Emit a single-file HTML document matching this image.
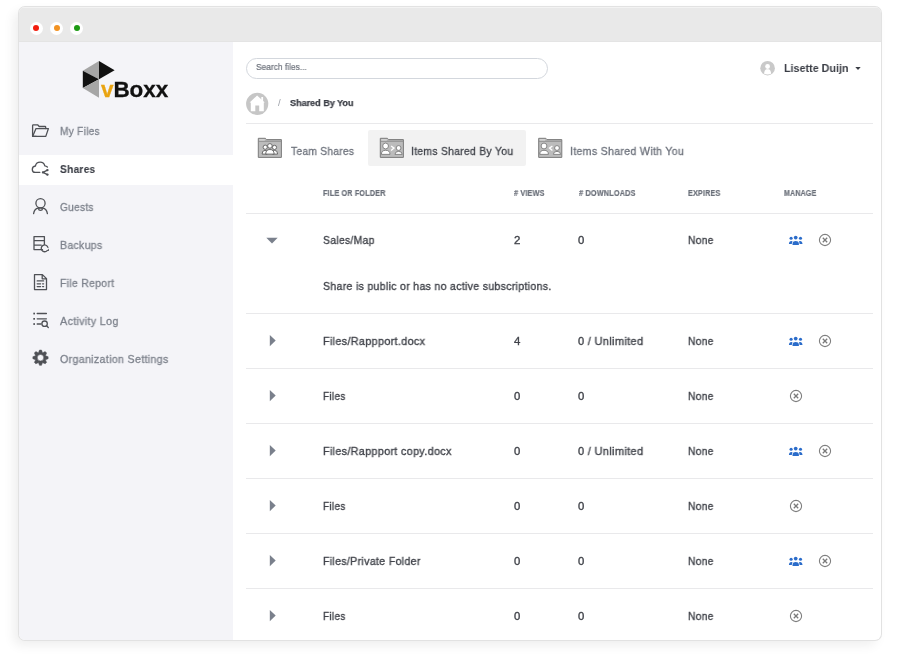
<!DOCTYPE html>
<html><head><meta charset="utf-8">
<style>
*{box-sizing:border-box;margin:0;padding:0}
html,body{width:900px;height:664px;overflow:hidden;background:#fff;font-family:"Liberation Sans",sans-serif}
.win{position:absolute;left:19px;top:7px;width:862px;height:633px;border-radius:6px;overflow:hidden;box-shadow:0 0 0 1px #e2e2e2,-5px 5px 12px rgba(0,0,0,.07);background:#fff}
.title{position:absolute;left:0;top:0;width:862px;height:35px;background:#e9e9e9;border-top:1.5px solid #f3f3f3;border-bottom:1px solid #e4e4e4}
.dot{position:absolute;top:13.5px;width:13px;height:13px;border-radius:50%;background:#fff}
.dot i{position:absolute;left:3.5px;top:3.5px;width:6px;height:6px;border-radius:50%}
.side{position:absolute;left:0;top:35px;width:214.2px;height:598px;background:#f4f4f8}
.t{position:absolute;white-space:nowrap;line-height:1;transform-origin:0 0;will-change:transform}
.ico{position:absolute;overflow:visible}
.hline{position:absolute;height:1px;background:#e9e9eb}
</style></head><body>
<div class="win">
  <div class="title">
    <div class="dot" style="left:10.5px"><i style="background:#f21d0e"></i></div>
    <div class="dot" style="left:31px"><i style="background:#f29222"></i></div>
    <div class="dot" style="left:51px"><i style="background:#1d9a13"></i></div>
  </div>
  <div class="side"></div>
</div>
<div style="position:absolute;left:19px;top:154.5px;width:214.2px;height:30px;background:#fff"></div>
<div style="position:absolute;left:368px;top:130px;width:158px;height:36px;background:#f2f2f2;border-radius:2px"></div>
<svg class="ico" style="left:0;top:0" width="900" height="664" viewBox="0 0 900 664">
  <polygon points="99,61 82.8,70.8 99,79.3" fill="#a6a6a6"/>
  <polygon points="99,61 114.6,70.2 99,79.3" fill="#111"/>
  <polygon points="82.8,70.8 82.8,87.9 99,79.3" fill="#111"/>
  <polygon points="82.8,87.9 99,97.7 99,79.3" fill="#a6a6a6"/>
  <!-- search bar -->
  <rect x="246.5" y="58.5" width="301" height="20" rx="10" fill="#fff" stroke="#d3d7dd" stroke-width="1"/>
  <!-- home -->
  <circle cx="257.2" cy="103.8" r="11.1" fill="#c6c6c6"/>
  <rect x="261.3" y="97" width="1.8" height="4" fill="#fff"/>
  <path d="M257.1 95.6 L249.6 102.4 L250.8 102.4 L250.8 111.2 L255.3 111.2 L255.3 105.4 L259.2 105.4 L259.2 111.2 L263.8 111.2 L263.8 102.4 L264.8 102.4 Z" fill="#fff"/>
  <!-- avatar -->
  <circle cx="767.6" cy="68.2" r="7.3" fill="#c9c9c9"/>
  <circle cx="767.6" cy="66.5" r="2.4" fill="#fff"/>
  <path d="M764.1 73.8 C764 71.3 765.2 69.8 766.4 69.2 L768.8 69.2 C770 69.8 771.2 71.3 771.1 73.8 Q767.6 75 764.1 73.8Z" fill="#fff"/>
  <polygon points="855.3,67 860.7,67 858,70" fill="#3a3d45"/>

  <!-- sidebar icons -->
  <g fill="none" stroke="#4f5156" stroke-width="1.3" stroke-linejoin="round" stroke-linecap="round">
    <!-- folder -->
    <path d="M36.2 136.4 L32.6 136.4 L32.6 125.6 Q32.6 124.8 33.4 124.8 L37.6 124.8 L39.2 126.5 L45 126.5 Q45.7 126.5 45.7 127.2 L45.7 128.6"/>
    <path d="M32.6 136.4 L36 128.6 L48.4 128.6 L45.8 136.4 Z"/>
    <!-- cloud share -->
    <path d="M39.8 172.4 L35.2 172.4 Q32.3 172.4 32.3 169.4 Q32.3 166.4 35.4 166 Q36.2 162.2 40.2 162.2 Q43.8 162.2 44.8 165.8 Q46.2 166 47.4 167"/>
    <path d="M47.4 170.2 L43 172.4 L47.4 174.6"/>
    <!-- person -->
    <circle cx="40.5" cy="203.2" r="4.6"/>
    <ellipse cx="40.5" cy="209.1" rx="1.9" ry="1.2"/>
    <path d="M33.6 213.6 Q34.4 208.8 38.3 208.2 M47.4 213.6 Q46.6 208.8 42.7 208.2"/>
    <!-- backups -->
    <path d="M42.5 249.6 L34 249.6 L34 236.6 L44.4 236.6 L44.4 244.4 M34 240.6 L44.4 240.6 M34 245.2 L41.2 245.2"/>
    <path d="M47.9 247.4 A3.4 3.4 0 1 0 47.2 250.6"/>
    <!-- file report -->
    <path d="M34.5 274.6 L42.4 274.6 L46.5 278.6 L46.5 289.6 L34.5 289.6 Z M42.2 274.8 L42.2 278.8 L46.3 278.8"/>
    <path d="M37.2 280.9 L43.6 280.9 M37.2 283.8 L40.6 283.8 M42.6 283.8 L43.6 283.8 M37.2 286.6 L40.6 286.6 M42.6 286.6 L43.6 286.6"/>
    <!-- activity log -->
    <path d="M37.2 313.5 L46.4 313.5 M37.2 318.8 L46.4 318.8 M37.2 324 L41 324"/>
    <circle cx="44.6" cy="323.7" r="2.7"/>
    <path d="M46.6 325.8 L48.3 327.5"/>
  </g>
  <g fill="#4f5156">
    <path d="M46.6 250.9 L48.9 250.9 L48.9 248.4 Z"/>
    <circle cx="47.4" cy="170.1" r="1.2"/><circle cx="47.4" cy="174.6" r="1.2"/><circle cx="42.9" cy="172.4" r="1.1"/>
    <rect x="33.3" y="312.7" width="1.7" height="1.7"/><rect x="33.3" y="318" width="1.7" height="1.7"/><rect x="33.3" y="323.2" width="1.7" height="1.7"/>
    <path fill-rule="evenodd" stroke="#4f5156" stroke-width="0.5" stroke-linejoin="round" d="M38.56 352.55 L39.50 350.06 L41.50 350.06 L42.44 352.55 L42.77 352.69 L45.19 351.60 L46.60 353.01 L45.51 355.43 L45.65 355.76 L48.14 356.70 L48.14 358.70 L45.65 359.64 L45.51 359.97 L46.60 362.39 L45.19 363.80 L42.77 362.71 L42.44 362.85 L41.50 365.34 L39.50 365.34 L38.56 362.85 L38.23 362.71 L35.81 363.80 L34.40 362.39 L35.49 359.97 L35.35 359.64 L32.86 358.70 L32.86 356.70 L35.35 355.76 L35.49 355.43 L34.40 353.01 L35.81 351.60 L38.23 352.69 Z M43.70 357.7 A3.2 3.2 0 1 0 37.30 357.7 A3.2 3.2 0 1 0 43.70 357.7 Z"/>
  </g>
  <g transform="translate(257.8,137.8)">
    <path d="M0.5 0.5 L7.6 0.5 L8.8 1.8 L23.6 1.8 L23.6 19.6 L0.5 19.6 Z" fill="#bcbcbc" stroke="#7b7b7b" stroke-width="1"/>
    <path d="M0.5 3.4 L23.6 3.4" stroke="#8a8a8a" stroke-width="1"/>
    <rect x="1.5" y="1.4" width="5.5" height="1.4" fill="#d8d8d8"/>
    <g fill="#fff" stroke="#5e5e5e" stroke-width="0.9">
      <circle cx="7.4" cy="9.4" r="2.1"/><circle cx="16.7" cy="9.6" r="2.1"/>
      <path d="M4.3 16.3 Q4.2 12.6 7.2 12.6 Q8.6 12.6 9.4 13.3 L9.4 16.3 Z"/>
      <path d="M19.8 16.3 Q19.9 12.6 16.9 12.6 Q15.5 12.6 14.7 13.3 L14.7 16.3 Z"/>
      <circle cx="12.1" cy="8.1" r="2.3"/>
      <path d="M7.9 16.3 Q7.9 11.7 12.1 11.7 Q16.3 11.7 16.3 16.3 Z"/>
    </g>
    </g><g transform="translate(379.8,137.8)">
    <path d="M0.5 0.5 L7.6 0.5 L8.8 1.8 L23.6 1.8 L23.6 19.6 L0.5 19.6 Z" fill="#bcbcbc" stroke="#7b7b7b" stroke-width="1"/>
    <path d="M0.5 3.4 L23.6 3.4" stroke="#8a8a8a" stroke-width="1"/>
    <rect x="1.5" y="1.4" width="5.5" height="1.4" fill="#d8d8d8"/>
    <g fill="#fff" stroke="#6e6e6e" stroke-width="0.8">
      <circle cx="5.8" cy="8.2" r="2.9"/>
      <path d="M1.6 16.6 Q1.6 12.5 5.8 12.5 Q10.2 12.5 10.2 16.6 Z"/>
      <circle cx="18.8" cy="10.2" r="2.4"/>
      <path d="M15.2 16.6 Q15.2 13.6 18.8 13.6 Q22.4 13.6 22.4 16.6 Z"/>
    </g>
    <path d="M11.3 8.2 L14.2 10.3 L11.3 12.6" fill="none" stroke="#fff" stroke-width="1.3"/>
    </g><g transform="translate(538.2,137.8)">
    <path d="M0.5 0.5 L7.6 0.5 L8.8 1.8 L23.6 1.8 L23.6 19.6 L0.5 19.6 Z" fill="#bcbcbc" stroke="#7b7b7b" stroke-width="1"/>
    <path d="M0.5 3.4 L23.6 3.4" stroke="#8a8a8a" stroke-width="1"/>
    <rect x="1.5" y="1.4" width="5.5" height="1.4" fill="#d8d8d8"/>
    <g fill="#fff" stroke="#6e6e6e" stroke-width="0.8">
      <circle cx="5.8" cy="8.2" r="2.9"/>
      <path d="M1.6 16.6 Q1.6 12.5 5.8 12.5 Q10.2 12.5 10.2 16.6 Z"/>
      <circle cx="18.8" cy="10.2" r="2.4"/>
      <path d="M15.2 16.6 Q15.2 13.6 18.8 13.6 Q22.4 13.6 22.4 16.6 Z"/>
    </g>
    <path d="M14.2 8.2 L11.3 10.3 L14.2 12.6" fill="none" stroke="#fff" stroke-width="1.3"/>
    </g>
</svg>
<div class="hline" style="left:246px;top:122.8px;width:627px"></div><div class="hline" style="left:246px;top:212.5px;width:627px"></div><div class="hline" style="left:246px;top:312.8px;width:627px"></div><div class="hline" style="left:246px;top:367.92px;width:627px"></div><div class="hline" style="left:246px;top:423.04px;width:627px"></div><div class="hline" style="left:246px;top:478.15999999999997px;width:627px"></div><div class="hline" style="left:246px;top:533.28px;width:627px"></div><div class="hline" style="left:246px;top:588.4px;width:627px"></div>
<div class="t" style="left:59.90px;top:126.05px;font-size:11.0px;font-weight:normal;color:#7d828c;transform:scaleX(0.9186);-webkit-text-stroke:0.3px #7d828c;letter-spacing:0.3px;">My Files</div><div class="t" style="left:59.90px;top:164.05px;font-size:11.0px;font-weight:bold;color:#3a3d45;transform:scaleX(0.9211);-webkit-text-stroke:0.1px #3a3d45;letter-spacing:0.3px;">Shares</div><div class="t" style="left:59.90px;top:202.05px;font-size:11.0px;font-weight:normal;color:#7d828c;transform:scaleX(0.9222);-webkit-text-stroke:0.3px #7d828c;letter-spacing:0.3px;">Guests</div><div class="t" style="left:59.90px;top:240.05px;font-size:11.0px;font-weight:normal;color:#7d828c;transform:scaleX(0.9591);-webkit-text-stroke:0.3px #7d828c;letter-spacing:0.3px;">Backups</div><div class="t" style="left:59.90px;top:278.05px;font-size:11.0px;font-weight:normal;color:#7d828c;transform:scaleX(0.9526);-webkit-text-stroke:0.3px #7d828c;letter-spacing:0.3px;">File Report</div><div class="t" style="left:59.90px;top:316.05px;font-size:11.0px;font-weight:normal;color:#7d828c;transform:scaleX(0.9797);-webkit-text-stroke:0.3px #7d828c;letter-spacing:0.3px;">Activity Log</div><div class="t" style="left:59.90px;top:354.05px;font-size:11.0px;font-weight:normal;color:#7d828c;transform:scaleX(0.9739);-webkit-text-stroke:0.3px #7d828c;letter-spacing:0.3px;">Organization Settings</div><div class="t" style="left:100.50px;top:79.17px;font-size:22.5px;font-weight:bold;color:#111;transform:scaleX(1.0000);-webkit-text-stroke:0.3px #111;letter-spacing:-0.1px"><span style="color:#e9a412;-webkit-text-stroke-color:#e9a412">v</span>Boxx</div><div class="t" style="left:255.70px;top:63.15px;font-size:9.0px;font-weight:normal;color:#6b707a;transform:scaleX(0.9315);-webkit-text-stroke:0.2px #6b707a;">Search files...</div><div class="t" style="left:784.00px;top:62.14px;font-size:11.6px;font-weight:bold;color:#3a3d45;transform:scaleX(0.9275);-webkit-text-stroke:0px #3a3d45;">Lisette Duijn</div><div class="t" style="left:277.50px;top:98.24px;font-size:9.6px;font-weight:normal;color:#9a9ea6;transform:scaleX(1.0000);-webkit-text-stroke:0px #9a9ea6;">/</div><div class="t" style="left:289.60px;top:98.41px;font-size:9.4px;font-weight:bold;color:#3a3d45;transform:scaleX(0.9652);-webkit-text-stroke:0.25px #3a3d45;">Shared By You</div><div class="t" style="left:291.40px;top:145.98px;font-size:11.2px;font-weight:normal;color:#6c717b;transform:scaleX(0.9145);-webkit-text-stroke:0.3px #6c717b;letter-spacing:0.3px;">Team Shares</div><div class="t" style="left:411.47px;top:145.98px;font-size:11.2px;font-weight:normal;color:#3f4249;transform:scaleX(0.9284);-webkit-text-stroke:0.3px #3f4249;letter-spacing:0.3px;">Items Shared By You</div><div class="t" style="left:569.85px;top:145.98px;font-size:11.2px;font-weight:normal;color:#6c717b;transform:scaleX(0.9508);-webkit-text-stroke:0.3px #6c717b;letter-spacing:0.3px;">Items Shared With You</div><div class="t" style="left:322.50px;top:190.13px;font-size:8.2px;font-weight:bold;color:#6b707a;transform:scaleX(0.8803);-webkit-text-stroke:0.2px #6b707a;letter-spacing:0.2px;">FILE OR FOLDER</div><div class="t" style="left:514.10px;top:190.13px;font-size:8.2px;font-weight:bold;color:#6b707a;transform:scaleX(0.8829);-webkit-text-stroke:0.2px #6b707a;letter-spacing:0.2px;"># VIEWS</div><div class="t" style="left:578.50px;top:190.13px;font-size:8.2px;font-weight:bold;color:#6b707a;transform:scaleX(0.8891);-webkit-text-stroke:0.2px #6b707a;letter-spacing:0.2px;"># DOWNLOADS</div><div class="t" style="left:687.50px;top:190.13px;font-size:8.2px;font-weight:bold;color:#6b707a;transform:scaleX(0.8784);-webkit-text-stroke:0.2px #6b707a;letter-spacing:0.2px;">EXPIRES</div><div class="t" style="left:784.00px;top:190.13px;font-size:8.2px;font-weight:bold;color:#6b707a;transform:scaleX(0.8605);-webkit-text-stroke:0.2px #6b707a;letter-spacing:0.2px;">MANAGE</div><div class="t" style="left:322.50px;top:234.80px;font-size:11.3px;font-weight:normal;color:#40434a;transform:scaleX(0.9143);-webkit-text-stroke:0.35px #40434a;letter-spacing:0.35px;">Sales/Map</div><div class="t" style="left:514.00px;top:234.80px;font-size:11.3px;font-weight:normal;color:#40434a;transform:scaleX(1.0167);-webkit-text-stroke:0.35px #40434a;">2</div><div class="t" style="left:578.10px;top:234.80px;font-size:11.3px;font-weight:normal;color:#40434a;transform:scaleX(1.0000);-webkit-text-stroke:0.35px #40434a;letter-spacing:0.35px;">0</div><div class="t" style="left:688.00px;top:234.80px;font-size:11.3px;font-weight:normal;color:#40434a;transform:scaleX(0.9036);-webkit-text-stroke:0.35px #40434a;letter-spacing:0.35px;">None</div><div class="t" style="left:322.50px;top:335.69px;font-size:11.3px;font-weight:normal;color:#40434a;transform:scaleX(0.9561);-webkit-text-stroke:0.35px #40434a;letter-spacing:0.35px;">Files/Rappport.docx</div><div class="t" style="left:514.00px;top:335.69px;font-size:11.3px;font-weight:normal;color:#40434a;transform:scaleX(1.0167);-webkit-text-stroke:0.35px #40434a;">4</div><div class="t" style="left:578.10px;top:335.69px;font-size:11.3px;font-weight:normal;color:#40434a;transform:scaleX(0.9716);-webkit-text-stroke:0.35px #40434a;letter-spacing:0.35px;">0 / Unlimited</div><div class="t" style="left:688.00px;top:335.69px;font-size:11.3px;font-weight:normal;color:#40434a;transform:scaleX(0.9036);-webkit-text-stroke:0.35px #40434a;letter-spacing:0.35px;">None</div><div class="t" style="left:322.50px;top:390.81px;font-size:11.3px;font-weight:normal;color:#40434a;transform:scaleX(0.8880);-webkit-text-stroke:0.35px #40434a;letter-spacing:0.35px;">Files</div><div class="t" style="left:514.00px;top:390.81px;font-size:11.3px;font-weight:normal;color:#40434a;transform:scaleX(1.0000);-webkit-text-stroke:0.35px #40434a;">0</div><div class="t" style="left:578.10px;top:390.81px;font-size:11.3px;font-weight:normal;color:#40434a;transform:scaleX(1.0000);-webkit-text-stroke:0.35px #40434a;letter-spacing:0.35px;">0</div><div class="t" style="left:688.00px;top:390.81px;font-size:11.3px;font-weight:normal;color:#40434a;transform:scaleX(0.9036);-webkit-text-stroke:0.35px #40434a;letter-spacing:0.35px;">None</div><div class="t" style="left:322.50px;top:445.94px;font-size:11.3px;font-weight:normal;color:#40434a;transform:scaleX(0.9533);-webkit-text-stroke:0.35px #40434a;letter-spacing:0.35px;">Files/Rappport copy.docx</div><div class="t" style="left:514.00px;top:445.94px;font-size:11.3px;font-weight:normal;color:#40434a;transform:scaleX(1.0000);-webkit-text-stroke:0.35px #40434a;">0</div><div class="t" style="left:578.10px;top:445.94px;font-size:11.3px;font-weight:normal;color:#40434a;transform:scaleX(0.9716);-webkit-text-stroke:0.35px #40434a;letter-spacing:0.35px;">0 / Unlimited</div><div class="t" style="left:688.00px;top:445.94px;font-size:11.3px;font-weight:normal;color:#40434a;transform:scaleX(0.9036);-webkit-text-stroke:0.35px #40434a;letter-spacing:0.35px;">None</div><div class="t" style="left:322.50px;top:501.06px;font-size:11.3px;font-weight:normal;color:#40434a;transform:scaleX(0.8880);-webkit-text-stroke:0.35px #40434a;letter-spacing:0.35px;">Files</div><div class="t" style="left:514.00px;top:501.06px;font-size:11.3px;font-weight:normal;color:#40434a;transform:scaleX(1.0000);-webkit-text-stroke:0.35px #40434a;">0</div><div class="t" style="left:578.10px;top:501.06px;font-size:11.3px;font-weight:normal;color:#40434a;transform:scaleX(1.0000);-webkit-text-stroke:0.35px #40434a;letter-spacing:0.35px;">0</div><div class="t" style="left:688.00px;top:501.06px;font-size:11.3px;font-weight:normal;color:#40434a;transform:scaleX(0.9036);-webkit-text-stroke:0.35px #40434a;letter-spacing:0.35px;">None</div><div class="t" style="left:322.50px;top:556.17px;font-size:11.3px;font-weight:normal;color:#40434a;transform:scaleX(0.9365);-webkit-text-stroke:0.35px #40434a;letter-spacing:0.35px;">Files/Private Folder</div><div class="t" style="left:514.00px;top:556.17px;font-size:11.3px;font-weight:normal;color:#40434a;transform:scaleX(1.0000);-webkit-text-stroke:0.35px #40434a;">0</div><div class="t" style="left:578.10px;top:556.17px;font-size:11.3px;font-weight:normal;color:#40434a;transform:scaleX(1.0000);-webkit-text-stroke:0.35px #40434a;letter-spacing:0.35px;">0</div><div class="t" style="left:688.00px;top:556.17px;font-size:11.3px;font-weight:normal;color:#40434a;transform:scaleX(0.9036);-webkit-text-stroke:0.35px #40434a;letter-spacing:0.35px;">None</div><div class="t" style="left:322.50px;top:611.29px;font-size:11.3px;font-weight:normal;color:#40434a;transform:scaleX(0.8880);-webkit-text-stroke:0.35px #40434a;letter-spacing:0.35px;">Files</div><div class="t" style="left:514.00px;top:611.29px;font-size:11.3px;font-weight:normal;color:#40434a;transform:scaleX(1.0000);-webkit-text-stroke:0.35px #40434a;">0</div><div class="t" style="left:578.10px;top:611.29px;font-size:11.3px;font-weight:normal;color:#40434a;transform:scaleX(1.0000);-webkit-text-stroke:0.35px #40434a;letter-spacing:0.35px;">0</div><div class="t" style="left:688.00px;top:611.29px;font-size:11.3px;font-weight:normal;color:#40434a;transform:scaleX(0.9036);-webkit-text-stroke:0.35px #40434a;letter-spacing:0.35px;">None</div><div class="t" style="left:322.50px;top:280.59px;font-size:11.3px;font-weight:normal;color:#40434a;transform:scaleX(0.9302);-webkit-text-stroke:0.35px #40434a;letter-spacing:0.35px;">Share is public or has no active subscriptions.</div>
<svg class="ico" style="left:265px;top:235.6px" width="14" height="8"><polygon points="1.3,1.7 12.7,1.7 7,7.6" fill="#7a808c"/></svg><svg class="ico" style="left:788px;top:234.6px" width="16" height="10" viewBox="0 0 16 10"><g fill="#2b6cca"><circle cx="3.1" cy="3.2" r="1.55"/><circle cx="7.7" cy="2.6" r="1.85"/><circle cx="12.5" cy="3.2" r="1.55"/><path d="M4.5 9.9 L4.6 8 C4.8 6.6 6 5.9 7.7 5.9 C9.4 5.9 10.6 6.6 10.8 8 L10.9 9.9Z"/><path d="M0.9 9 C1 7.2 2 6.1 3.3 6.1 C4 6.1 4.4 6.3 4.6 6.6 C4.1 7.2 3.9 8 3.8 9Z"/><path d="M14.5 9 C14.4 7.2 13.4 6.1 12.1 6.1 C11.4 6.1 11 6.3 10.8 6.6 C11.3 7.2 11.5 8 11.6 9Z"/></g></svg><svg class="ico" style="left:818px;top:232.79999999999998px" width="14" height="14" viewBox="-7 -7 14 14"><circle r="5.6" fill="none" stroke="#7f7f7f" stroke-width="1.1"/><path d="M-2.2 -2.2L2.2 2.2M2.2 -2.2L-2.2 2.2" stroke="#7a7a7a" stroke-width="1.3"/></svg><svg class="ico" style="left:268px;top:333.5px" width="10" height="14"><polygon points="1.8,1 7.7,6.5 1.8,12.2" fill="#7a808c"/></svg><svg class="ico" style="left:788px;top:335.5px" width="16" height="10" viewBox="0 0 16 10"><g fill="#2b6cca"><circle cx="3.1" cy="3.2" r="1.55"/><circle cx="7.7" cy="2.6" r="1.85"/><circle cx="12.5" cy="3.2" r="1.55"/><path d="M4.5 9.9 L4.6 8 C4.8 6.6 6 5.9 7.7 5.9 C9.4 5.9 10.6 6.6 10.8 8 L10.9 9.9Z"/><path d="M0.9 9 C1 7.2 2 6.1 3.3 6.1 C4 6.1 4.4 6.3 4.6 6.6 C4.1 7.2 3.9 8 3.8 9Z"/><path d="M14.5 9 C14.4 7.2 13.4 6.1 12.1 6.1 C11.4 6.1 11 6.3 10.8 6.6 C11.3 7.2 11.5 8 11.6 9Z"/></g></svg><svg class="ico" style="left:818px;top:333.7px" width="14" height="14" viewBox="-7 -7 14 14"><circle r="5.6" fill="none" stroke="#7f7f7f" stroke-width="1.1"/><path d="M-2.2 -2.2L2.2 2.2M2.2 -2.2L-2.2 2.2" stroke="#7a7a7a" stroke-width="1.3"/></svg><svg class="ico" style="left:268px;top:388.62px" width="10" height="14"><polygon points="1.8,1 7.7,6.5 1.8,12.2" fill="#7a808c"/></svg><svg class="ico" style="left:789px;top:388.82px" width="14" height="14" viewBox="-7 -7 14 14"><circle r="5.6" fill="none" stroke="#7f7f7f" stroke-width="1.1"/><path d="M-2.2 -2.2L2.2 2.2M2.2 -2.2L-2.2 2.2" stroke="#7a7a7a" stroke-width="1.3"/></svg><svg class="ico" style="left:268px;top:443.74px" width="10" height="14"><polygon points="1.8,1 7.7,6.5 1.8,12.2" fill="#7a808c"/></svg><svg class="ico" style="left:788px;top:445.74px" width="16" height="10" viewBox="0 0 16 10"><g fill="#2b6cca"><circle cx="3.1" cy="3.2" r="1.55"/><circle cx="7.7" cy="2.6" r="1.85"/><circle cx="12.5" cy="3.2" r="1.55"/><path d="M4.5 9.9 L4.6 8 C4.8 6.6 6 5.9 7.7 5.9 C9.4 5.9 10.6 6.6 10.8 8 L10.9 9.9Z"/><path d="M0.9 9 C1 7.2 2 6.1 3.3 6.1 C4 6.1 4.4 6.3 4.6 6.6 C4.1 7.2 3.9 8 3.8 9Z"/><path d="M14.5 9 C14.4 7.2 13.4 6.1 12.1 6.1 C11.4 6.1 11 6.3 10.8 6.6 C11.3 7.2 11.5 8 11.6 9Z"/></g></svg><svg class="ico" style="left:818px;top:443.94px" width="14" height="14" viewBox="-7 -7 14 14"><circle r="5.6" fill="none" stroke="#7f7f7f" stroke-width="1.1"/><path d="M-2.2 -2.2L2.2 2.2M2.2 -2.2L-2.2 2.2" stroke="#7a7a7a" stroke-width="1.3"/></svg><svg class="ico" style="left:268px;top:498.86px" width="10" height="14"><polygon points="1.8,1 7.7,6.5 1.8,12.2" fill="#7a808c"/></svg><svg class="ico" style="left:789px;top:499.06px" width="14" height="14" viewBox="-7 -7 14 14"><circle r="5.6" fill="none" stroke="#7f7f7f" stroke-width="1.1"/><path d="M-2.2 -2.2L2.2 2.2M2.2 -2.2L-2.2 2.2" stroke="#7a7a7a" stroke-width="1.3"/></svg><svg class="ico" style="left:268px;top:553.98px" width="10" height="14"><polygon points="1.8,1 7.7,6.5 1.8,12.2" fill="#7a808c"/></svg><svg class="ico" style="left:788px;top:555.98px" width="16" height="10" viewBox="0 0 16 10"><g fill="#2b6cca"><circle cx="3.1" cy="3.2" r="1.55"/><circle cx="7.7" cy="2.6" r="1.85"/><circle cx="12.5" cy="3.2" r="1.55"/><path d="M4.5 9.9 L4.6 8 C4.8 6.6 6 5.9 7.7 5.9 C9.4 5.9 10.6 6.6 10.8 8 L10.9 9.9Z"/><path d="M0.9 9 C1 7.2 2 6.1 3.3 6.1 C4 6.1 4.4 6.3 4.6 6.6 C4.1 7.2 3.9 8 3.8 9Z"/><path d="M14.5 9 C14.4 7.2 13.4 6.1 12.1 6.1 C11.4 6.1 11 6.3 10.8 6.6 C11.3 7.2 11.5 8 11.6 9Z"/></g></svg><svg class="ico" style="left:818px;top:554.1800000000001px" width="14" height="14" viewBox="-7 -7 14 14"><circle r="5.6" fill="none" stroke="#7f7f7f" stroke-width="1.1"/><path d="M-2.2 -2.2L2.2 2.2M2.2 -2.2L-2.2 2.2" stroke="#7a7a7a" stroke-width="1.3"/></svg><svg class="ico" style="left:268px;top:609.0999999999999px" width="10" height="14"><polygon points="1.8,1 7.7,6.5 1.8,12.2" fill="#7a808c"/></svg><svg class="ico" style="left:789px;top:609.3px" width="14" height="14" viewBox="-7 -7 14 14"><circle r="5.6" fill="none" stroke="#7f7f7f" stroke-width="1.1"/><path d="M-2.2 -2.2L2.2 2.2M2.2 -2.2L-2.2 2.2" stroke="#7a7a7a" stroke-width="1.3"/></svg>
</body></html>
